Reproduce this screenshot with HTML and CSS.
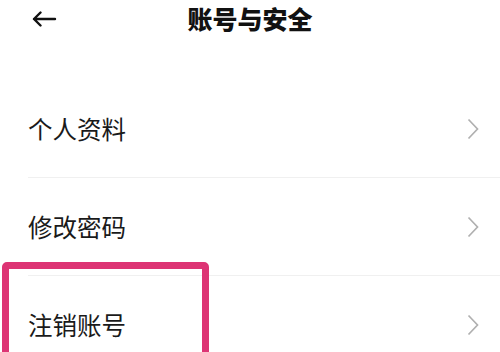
FILE: index.html
```html
<!DOCTYPE html>
<html lang="zh-CN">
<head>
<meta charset="utf-8">
<link rel="stylesheet" href="styles.css">
</head>
<body>
<div class="page">
  <header class="topbar">
    <span class="back">
      <svg width="26" height="16" viewBox="0 0 26 16"><path d="M24 8H3M9.5 1.5L3 8l6.5 6.5" fill="none" stroke="#111" stroke-width="2.4" stroke-linecap="round" stroke-linejoin="round"/></svg>
    </span>
    <h1 class="title">账号与安全</h1>
  </header>
  <ul class="list">
    <li class="row"><span class="label">个人资料</span><svg class="chev" width="12" height="22" viewBox="0 0 12 22"><path d="M1.5 1.5L10.5 11 1.5 20.5" fill="none" stroke="#b0b0b0" stroke-width="1.7"/></svg></li>
    <li class="row"><span class="label">修改密码</span><svg class="chev" width="12" height="22" viewBox="0 0 12 22"><path d="M1.5 1.5L10.5 11 1.5 20.5" fill="none" stroke="#b0b0b0" stroke-width="1.7"/></svg></li>
    <li class="row"><span class="label">注销账号</span><svg class="chev" width="12" height="22" viewBox="0 0 12 22"><path d="M1.5 1.5L10.5 11 1.5 20.5" fill="none" stroke="#b0b0b0" stroke-width="1.7"/></svg></li>
  </ul>
  <div class="highlight"></div>
</div>
</body>
</html>
```
FILE: styles.css
```css
html, body {
  margin: 0;
  padding: 0;
  background: #fff;
}
body {
  font-family: "Noto Sans CJK SC", "Noto Sans", sans-serif;
  color: #1a1a1a;
  overflow: hidden;
}
.page {
  position: relative;
  width: 500px;
  height: 352px;
  overflow: hidden;
}
.topbar {
  position: relative;
  height: 36px;
  display: flex;
  align-items: center;
  justify-content: center;
  margin-bottom: 44px;
}
.back {
  position: absolute;
  left: 31px;
  top: 11px;
  display: flex;
}
.title {
  margin: 0;
  font-size: 25px;
  font-weight: 900;
  line-height: 36px;
  color: #111;
}
.list {
  list-style: none;
  margin: 0;
  padding: 0;
}
.row {
  height: 96px;
  margin-left: 28px;
  padding-right: 21px;
  padding-top: 1px;
  border-bottom: 1px solid #f0f0f0;
  display: flex;
  align-items: center;
  justify-content: space-between;
}
.label {
  font-size: 24.5px;
  line-height: 1;
}
.chev {
  display: block;
}
.highlight {
  position: absolute;
  left: 2px;
  top: 262px;
  width: 193px;
  height: 120px;
  border: 7px solid #dd3474;
  border-radius: 5px;
}
```
